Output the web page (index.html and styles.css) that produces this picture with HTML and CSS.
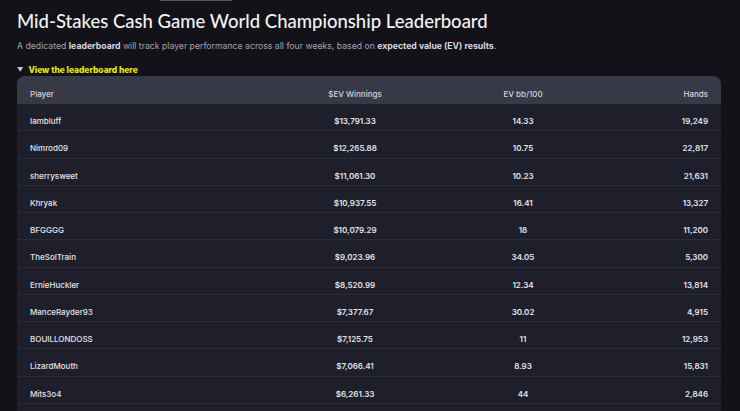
FILE: index.html
```html
<!DOCTYPE html>
<html lang="en">
<head>
<meta charset="utf-8">
<title>Leaderboard</title>
<link rel="stylesheet" href="styles.css">
</head>
<body>
<div class="topbar"></div>
<main class="page">
  <h1 class="title">Mid-Stakes Cash Game World Championship Leaderboard</h1>
  <p class="lead">A dedicated <strong>leaderboard</strong> will track player performance across all four weeks, based on <strong>expected value (EV) results</strong>.</p>
  <details class="toggle" open>
    <summary class="summary"><span class="caret">▼</span>View the leaderboard here</summary>
    <table class="board">
      <colgroup>
        <col class="c1"><col class="c2"><col class="c3"><col class="c4">
      </colgroup>
      <thead>
        <tr><th class="left">Player</th><th>$EV Winnings</th><th>EV bb/100</th><th class="right">Hands</th></tr>
      </thead>
      <tbody>
        <tr><td class="left">Iambluff</td><td>$13,791.33</td><td>14.33</td><td class="right">19,249</td></tr>
        <tr><td class="left">Nimrod09</td><td>$12,265.88</td><td>10.75</td><td class="right">22,817</td></tr>
        <tr><td class="left">sherrysweet</td><td>$11,061.30</td><td>10.23</td><td class="right">21,631</td></tr>
        <tr><td class="left">Khryak</td><td>$10,937.55</td><td>16.41</td><td class="right">13,327</td></tr>
        <tr><td class="left">BFGGGG</td><td>$10,079.29</td><td>18</td><td class="right">11,200</td></tr>
        <tr><td class="left">TheSolTrain</td><td>$9,023.96</td><td>34.05</td><td class="right">5,300</td></tr>
        <tr><td class="left">ErnieHuckler</td><td>$8,520.99</td><td>12.34</td><td class="right">13,814</td></tr>
        <tr><td class="left">ManceRayder93</td><td>$7,377.67</td><td>30.02</td><td class="right">4,915</td></tr>
        <tr><td class="left">BOUILLONDOSS</td><td>$7,125.75</td><td>11</td><td class="right">12,953</td></tr>
        <tr><td class="left">LizardMouth</td><td>$7,066.41</td><td>8.93</td><td class="right">15,831</td></tr>
        <tr><td class="left">Mits3o4</td><td>$6,261.33</td><td>44</td><td class="right">2,846</td></tr>
        <tr><td class="left">&nbsp;</td><td></td><td></td><td class="right"></td></tr>
      </tbody>
    </table>
  </details>
</main>
</body>
</html>
```

FILE: styles.css
```css
* { box-sizing: border-box; }
html, body {
  margin: 0;
  padding: 0;
  background: #121218;
  height: 100%;
  overflow: hidden;
}
body {
  font-family: Inter, "Noto Sans", sans-serif;
  color: #e6e6ec;
  position: relative;
}
.topbar {
  position: absolute;
  top: 0;
  left: 160px;
  width: 72px;
  height: 1px;
  background: #55555c;
}
.page {
  padding: 8px 19px 0 17px;
}
.title {
  margin: 0;
  font-family: Lato, Inter, sans-serif;
  font-size: 18.5px;
  line-height: 26px;
  font-weight: 500;
  color: #f2f2f4;
}
.lead {
  margin: 5px 0 0;
  font-size: 8.7px;
  line-height: 14px;
  color: #a3a3b4;
}
.lead strong {
  color: #d6d6e4;
  font-weight: 700;
}
.toggle { margin-top: 12px; }
.summary {
  list-style: none;
  font-size: 8.4px;
  line-height: 10px;
  font-weight: 800;
  color: #e6ee00;
  cursor: pointer;
  display: flex;
  align-items: center;
}
.summary::-webkit-details-marker { display: none; }
.caret {
  font-size: 6px;
  color: #c8c8d0;
  margin-right: 5px;
}
.board {
  margin-top: 1px;
  width: 704px;
  border-collapse: separate;
  border-spacing: 0;
  table-layout: fixed;
  background: #1e1f2a;
  border-radius: 8px 8px 0 0;
  overflow: hidden;
  font-size: 8px;
}
.c1 { width: 220px; }
.c2 { width: 236px; }
.c3 { width: 100px; }
.c4 { width: 148px; }
.board th, .board td {
  padding: 11px 13px 3px;
  line-height: 12px;
  text-align: center;
  white-space: nowrap;
  border-bottom: 1px solid #2b2c39;
}
.board th {
  background: #373946;
  font-weight: 500;
  color: #d4d4de;
  height: 28px;
  border-bottom: none;
}
.board td {
  height: 27.25px;
  font-weight: 600;
  color: #e4e4ec;
}
.board td.left { font-weight: 500; }
.board .left { text-align: left; }
.board .right { text-align: right; }
```
